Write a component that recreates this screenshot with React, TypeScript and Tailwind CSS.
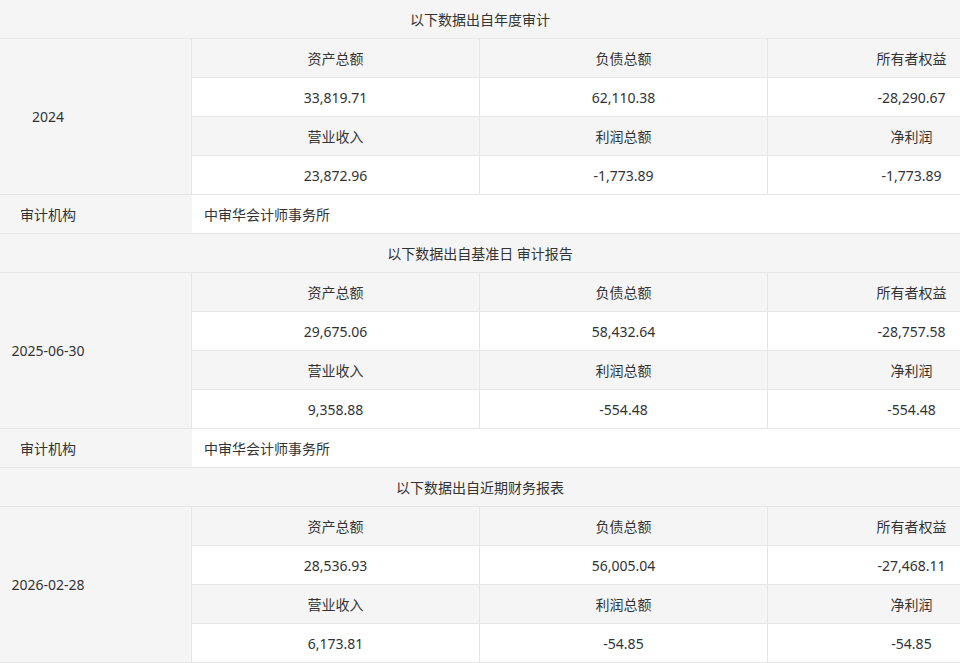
const blocks = [
  {
    title: '以下数据出自年度审计',
    date: '2024',
    vals: [['33,819.71', '62,110.38', '-28,290.67'], ['23,872.96', '-1,773.89', '-1,773.89']],
    audit: true,
  },
  {
    title: '以下数据出自基准日 审计报告',
    date: '2025-06-30',
    vals: [['29,675.06', '58,432.64', '-28,757.58'], ['9,358.88', '-554.48', '-554.48']],
    audit: true,
  },
  {
    title: '以下数据出自近期财务报表',
    date: '2026-02-28',
    vals: [['28,536.93', '56,005.04', '-27,468.11'], ['6,173.81', '-54.85', '-54.85']],
    audit: false,
  },
];

const labels = [['资产总额', '负债总额', '所有者权益'], ['营业收入', '利润总额', '净利润']];

const cell = 'h-[39px] flex items-center justify-center border-b border-r border-[#e6e6e6]';

export default function App() {
  return (
    <div
      className="w-[960px] h-[663px] overflow-hidden bg-white text-[14px] text-[#333]"
      style={{ fontFamily: '"Noto Sans", "Noto Sans CJK SC", sans-serif' }}
    >
      {blocks.map((b) => (
        <div key={b.date}>
          <div className="h-[39px] w-[960px] flex items-center justify-center bg-[#f5f5f5] border-b border-[#e6e6e6]">
            {b.title}
          </div>
          <div className="flex w-[1056px]">
            <div className="w-[192px] shrink-0 bg-[#f5f5f5] border-b border-r border-[#e6e6e6] flex items-center">
              <div className="w-[96px] text-center">{b.date}</div>
            </div>
            <div className="grid grid-cols-[288px_288px_288px]">
              {[0, 1].map((r) => (
                <div key={r} className="contents">
                  {labels[r].map((l) => (
                    <div key={l} className={`${cell} bg-[#f5f5f5]`}>{l}</div>
                  ))}
                  {b.vals[r].map((v, i) => (
                    <div key={i} className={`${cell} bg-white`}>{v}</div>
                  ))}
                </div>
              ))}
            </div>
          </div>
          {b.audit && (
            <div className="flex h-[39px] border-b border-[#e6e6e6]">
              <div className="w-[192px] shrink-0 bg-[#f5f5f5] flex items-center">
                <div className="w-[96px] text-center">审计机构</div>
              </div>
              <div className="flex-1 flex items-center pl-3 bg-white">中审华会计师事务所</div>
            </div>
          )}
        </div>
      ))}
    </div>
  );
}
